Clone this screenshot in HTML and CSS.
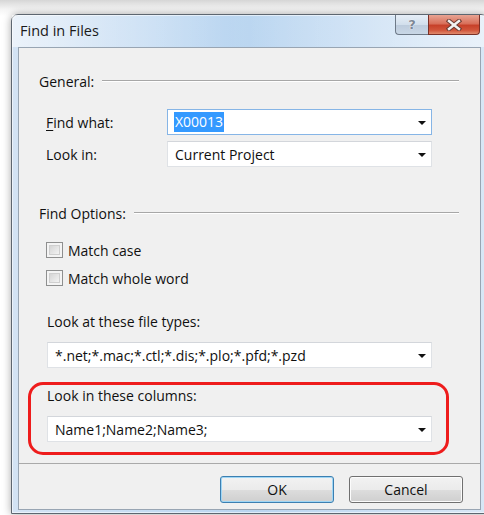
FILE: index.html
```html
<!DOCTYPE html>
<html>
<head>
<meta charset="utf-8">
<title>Find in Files</title>
<link rel="stylesheet" href="styles.css">
</head>
<body>
<div class="window">
  <div class="titlebar">
    <span class="title">Find in Files</span>
    <div class="caption-btns">
      <span class="cap help"><span class="qmark">?</span></span>
      <span class="cap close">
        <svg width="16" height="12" viewBox="0 0 16 12">
          <path d="M3 2 L13 10 M13 2 L3 10" stroke="#6b3b33" stroke-width="4.4" stroke-linecap="square"/>
          <path d="M3 2 L13 10 M13 2 L3 10" stroke="#f2f2f2" stroke-width="2.4" stroke-linecap="square"/>
        </svg>
      </span>
    </div>
  </div>
  <div class="panel">
    <div class="panel-body">
      <div class="group-head first"><span>General:</span><i class="rule"></i></div>
      <div class="field-row top">
        <span class="field-label"><u>F</u>ind what:</span>
        <div class="combo focus"><span class="sel">X00013</span><i class="arrow"></i></div>
      </div>
      <div class="field-row">
        <span class="field-label">Look in:</span>
        <div class="combo"><span class="val">Current Project</span><i class="arrow"></i></div>
      </div>
      <div class="group-head options"><span>Find Options:</span><i class="rule"></i></div>
      <div class="check first"><span class="box"></span><span>Match case</span></div>
      <div class="check"><span class="box"></span><span>Match whole word</span></div>
      <div class="stack-label types">Look at these file types:</div>
      <div class="combo wide"><span class="val">*.net;*.mac;*.ctl;*.dis;*.plo;*.pfd;*.pzd</span><i class="arrow"></i></div>
      <div class="highlight">
        <div class="stack-label">Look in these columns:</div>
        <div class="combo wide"><span class="val">Name1;Name2;Name3;</span><i class="arrow"></i></div>
      </div>
    </div>
    <div class="panel-foot">
      <button class="btn default">OK</button>
      <button class="btn">Cancel</button>
    </div>
  </div>
</div>
</body>
</html>
```

FILE: styles.css
```css
html, body {
  margin: 0;
  height: 100%;
}

body {
  overflow: hidden;
  background: linear-gradient(#d6d6d6 0, #f4f4f4 9px, #ffffff 16px);
  font-family: "Open Sans", "Noto Sans", sans-serif;
  font-size: 14px;
  color: #101010;
}

/* Aero window frame */
.window {
  box-sizing: border-box;
  width: 477px;
  margin: 14px 0 0 11px;
  border: 1px solid #5d6670;
  border-radius: 7px 7px 0 0;
  padding: 0 6px 3px 6px;
  background: linear-gradient(90deg, #d3e3f4 0%, #c5dcf3 30%, #b9d5f0 50%, #cadff4 75%, #d8e7f6 100%);
  box-shadow: 0 0 9px rgba(0, 0, 0, 0.35), inset 0 0 0 1px rgba(255, 255, 255, 0.55);
}

.titlebar {
  height: 32px;
  display: flex;
  align-items: flex-start;
  justify-content: space-between;
  background: linear-gradient(90deg, rgba(255,255,255,0.55) 0%, rgba(255,255,255,0.25) 20%, rgba(255,255,255,0) 45%, rgba(255,255,255,0.2) 75%, rgba(255,255,255,0.45) 100%);
  margin: 0 -6px;
  padding: 0 7px 0 8px;
}

.title {
  padding-top: 5px;
  font-size: 14.5px;
  color: #1a1a1a;
  line-height: 22px;
}

.caption-btns {
  display: flex;
  height: 20px;
}

.cap {
  box-sizing: border-box;
  height: 20px;
  display: flex;
  align-items: center;
  justify-content: center;
  border: 1px solid #6e7a88;
  border-top: none;
}

.help {
  width: 33px;
  border-right: none;
  border-radius: 0 0 0 4px;
  background: linear-gradient(#e6eef7 0%, #d2dfec 50%, #bccbdc 51%, #c9d7e6 100%);
}

.qmark {
  font-family: "DejaVu Sans", sans-serif;
  font-weight: bold;
  font-size: 13px;
  color: #7d8896;
  text-shadow: 0 0 1px #ffffff, 0 0 1px #ffffff;
  line-height: 1;
}

.close {
  width: 52px;
  border-color: #7a3027;
  border-radius: 0 0 4px 0;
  background: linear-gradient(#e8a493 0%, #d8705b 45%, #c7412a 55%, #d1553b 80%, #e08a6c 100%);
}

.close svg {
  display: block;
}

/* Client area */
.panel {
  border: 1px solid #98a5b3;
  background: #f0f0f0;
}

.panel-body {
  padding: 24px 21px 8px 20px;
}

.group-head {
  height: 20px;
  display: flex;
  align-items: center;
  gap: 8px;
  line-height: 20px;
}

.group-head .rule {
  flex: 1;
  height: 1px;
  background: #a7a7a7;
  box-shadow: 0 1px 0 #ffffff;
  margin-top: -3px;
}

.group-head.options {
  margin-top: 37px;
}

.field-row {
  display: flex;
  align-items: center;
  padding-left: 7px;
  margin-top: 6px;
}

.field-row.top {
  margin-top: 17px;
}

.field-label {
  width: 121px;
  flex: none;
}

.field-label u {
  text-underline-offset: 2px;
}

.combo {
  box-sizing: border-box;
  height: 26px;
  width: 265px;
  display: flex;
  align-items: center;
  justify-content: space-between;
  background: #ffffff;
  border: 1px solid #dfe2e6;
  border-top-color: #d3d6db;
  padding: 0 5px 0 7px;
}

.combo.focus {
  border-color: #86b5e6;
  padding-left: 6px;
}

.combo.wide {
  width: 385px;
  margin-left: 8px;
}

.sel {
  background: #3399ff;
  color: #ffffff;
  line-height: 20px;
  padding: 0 1px;
}

.val {
  white-space: nowrap;
}

.arrow {
  width: 0;
  height: 0;
  border-left: 4px solid transparent;
  border-right: 4px solid transparent;
  border-top: 4px solid #111111;
  margin-top: 1px;
}

.check {
  display: flex;
  align-items: center;
  gap: 5px;
  height: 20px;
  margin: 8px 0 0 7px;
}

.check.first {
  margin-top: 16px;
}

.box {
  box-sizing: border-box;
  width: 17px;
  height: 16px;
  border: 1px solid #8e8f8f;
  box-shadow: inset 0 0 0 2px #f4f4f4, inset 0 0 0 3px #cfcfcf;
  background: linear-gradient(135deg, #cbcbcb 0%, #eeeeee 70%, #f8f8f8 100%);
}

.stack-label {
  height: 20px;
  line-height: 20px;
  margin-left: 8px;
}

.stack-label.types {
  margin-top: 24px;
}

.stack-label + .combo {
  margin-top: 10px;
}

.highlight {
  box-sizing: border-box;
  width: 421px;
  margin: 14px 0 0 -11px;
  border: 3px solid #ee1c1c;
  border-radius: 15px;
  padding: 1px 14px 10px 8px;
}

/* Footer with the command buttons */
.panel-foot {
  border-top: 1px solid #a9a9a9;
  display: flex;
  justify-content: flex-end;
  gap: 15px;
  padding: 12px 17px 6px 0;
}

.btn {
  box-sizing: border-box;
  width: 114px;
  height: 27px;
  font-family: inherit;
  font-size: 14px;
  color: #101010;
  border: 1px solid #707070;
  border-radius: 3px;
  background: linear-gradient(#f2f2f2 0%, #ebebeb 50%, #dddddd 51%, #cfcfcf 100%);
  box-shadow: inset 0 0 0 1px #fcfcfc;
  padding: 0;
}

.btn.default {
  border-color: #3c7fb1;
  box-shadow: inset 0 0 0 1px #9fd6f5;
}
```
